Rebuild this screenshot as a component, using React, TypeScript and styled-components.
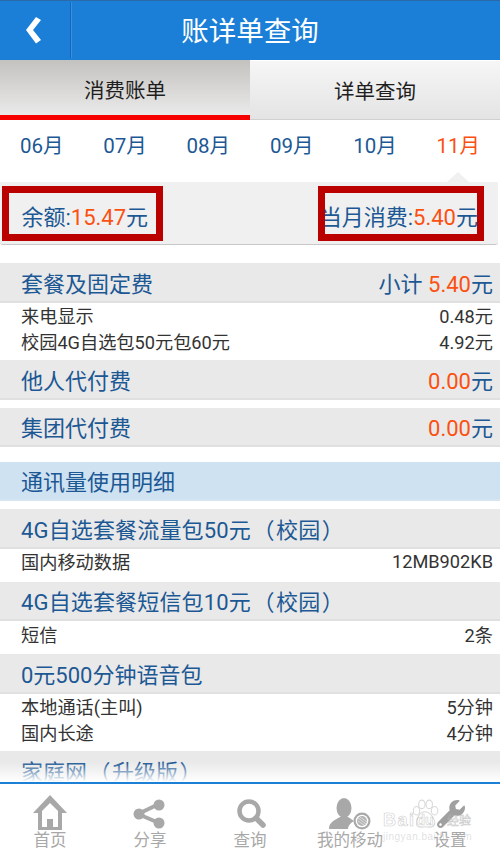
import React from 'react';
import styled, { createGlobalStyle } from 'styled-components';
import { FaWrench } from 'react-icons/fa';

const GlobalStyle = createGlobalStyle`
  html, body { margin: 0; padding: 0; background: #fff; }
  * { box-sizing: border-box; }
  body { font-family: Roboto, "Noto Sans CJK SC", sans-serif; }
`;

const BLUE = '#1c5894';
const ORANGE = '#fb5010';

const Page = styled.div`
  position: relative;
  width: 500px;
  height: 854px;
  display: flex;
  flex-direction: column;
  overflow: hidden;
  background: #fff;
`;

const Header = styled.header`
  flex: 0 0 60px;
  display: flex;
  align-items: stretch;
  background: #1b7fd8;
  border-top: 1px solid #2c69a8;
`;
const BackButton = styled.div`
  flex: 0 0 71px;
  display: flex;
  align-items: center;
  justify-content: center;
  margin: 1px 0 2px;
  padding: 0 2px 0 0;
  border-right: 1px solid #1468b8;
  box-shadow: 1px 0 0 #3590e0;
`;
const Title = styled.h1`
  flex: 1;
  height: 59px;
  margin: 0;
  padding: 0 111px 0 40px;
  text-align: center;
  color: #fff;
  font-size: 27.5px;
  font-weight: 400;
  line-height: 61px;
  white-space: nowrap;
`;

const Tabs = styled.div`
  flex: 0 0 60px;
  display: flex;
`;
const Tab = styled.div<{ $active?: boolean }>`
  flex: 1;
  display: flex;
  align-items: center;
  justify-content: center;
  font-size: 20.5px;
  color: #1e1e1e;
  padding: ${p => (p.$active ? '3px 0 0' : '0 0 1px')};
  background: ${p =>
    p.$active
      ? 'linear-gradient(#c4c2bf, #eaeaea)'
      : 'linear-gradient(#f6f6f6, #e4e4e4)'};
  border-bottom: ${p => (p.$active ? '5px solid #f60000' : '1px solid #d0d0d0')};
  border-top: ${p => (p.$active ? 'none' : '1px solid #fff')};
`;

const Months = styled.div`
  flex: 0 0 62px;
  display: flex;
  align-items: flex-start;
  padding-top: 12px;
`;
const Month = styled.div<{ $active?: boolean }>`
  flex: 1;
  text-align: center;
  font-size: 20.5px;
  line-height: 28px;
  color: ${p => (p.$active ? ORANGE : BLUE)};
`;

const Summary = styled.div`
  position: relative;
  flex: 0 0 63px;
  width: 498px;
  display: flex;
  align-items: center;
  justify-content: space-between;
  padding: 11px 20px 8px 21.5px;
  background: #f0f0f0;
  border-bottom: 1px solid #c8c8c8;
  border-radius: 0 0 3px 3px;
  font-size: 22px;
  color: ${BLUE};
  &::before {
    content: '';
    position: absolute;
    right: 29px;
    top: -10px;
    border-left: 11px solid transparent;
    border-right: 11px solid transparent;
    border-bottom: 10px solid #f0f0f0;
  }
`;
const Mark = styled.div<{ $left: number; $width: number }>`
  position: absolute;
  top: 4px;
  left: ${p => p.$left}px;
  width: ${p => p.$width}px;
  height: 55px;
  border: 7px solid #bb0000;
`;
const Amount = styled.span`
  color: ${ORANGE};
`;

const Content = styled.div`
  flex: 1;
  overflow: hidden;
  min-height: 0;
`;
const Section = styled.section<{ $gap: number }>`
  margin-top: ${p => p.$gap}px;
`;
const SectionHead = styled.div<{ $tint?: boolean }>`
  height: ${p => (p.$tint ? '38.5px' : '39.5px')};
  display: flex;
  align-items: center;
  justify-content: space-between;
  padding: 0 7px 0 21px;
  background: ${p => (p.$tint ? '#cfe2f2' : '#e9e9e9')};
  border-bottom: 2px solid ${p => (p.$tint ? '#d6e5f2' : '#e0e0e0')};
  font-size: 22px;
  color: ${BLUE};
  white-space: nowrap;
`;
const Paren = styled.span`
  font-family: "Noto Sans CJK TC", sans-serif;
  margin: 0 1.5px;
`;
const PackageName = styled.span`
  letter-spacing: 0.15px;
`;
const Rows = styled.div`
  min-height: 33px;
  padding: 0 7px 6.5px 21px;
`;
const Row = styled.div`
  height: 25.5px;
  display: flex;
  align-items: center;
  justify-content: space-between;
  font-size: 18.2px;
  color: #333;
`;

const Fade = styled.div`
  position: absolute;
  left: 0;
  right: 0;
  bottom: 72px;
  height: 20px;
  background: linear-gradient(rgba(255, 255, 255, 0), #fff);
`;

const Footer = styled.footer`
  position: relative;
  flex: 0 0 72px;
  display: flex;
  background: #fff;
  border-top: 2px solid #1b80d6;
`;
const NavItem = styled.div`
  flex: 1;
  display: flex;
  flex-direction: column;
  align-items: center;
  font-size: 16.5px;
  line-height: 16px;
  color: #a8a8a8;
`;
const NavIcon = styled.svg`
  display: block;
  width: 100px;
  height: 48px;
  margin-bottom: 1px;
  fill: #a8a8a8;
`;
const WrenchBox = styled.div`
  height: 49px;
  padding: 16px 0 0 2px;
  color: #a0a0a0;
`;

const Watermark = styled.div`
  position: absolute;
  left: 383px;
  top: 27px;
  width: 88px;
  pointer-events: none;
`;
const WatermarkMain = styled.div`
  display: flex;
  align-items: center;
  white-space: nowrap;
  font-family: "Liberation Sans", sans-serif;
  font-size: 18px;
  font-weight: 700;
  line-height: 18px;
  letter-spacing: 1.5px;
  color: rgba(255, 255, 255, 0.2);
  -webkit-text-stroke: 0.6px rgba(170, 170, 170, 0.6);
`;
const WatermarkDu = styled.span`
  margin-left: 1px;
  font-size: 14px;
  letter-spacing: 0;
`;
const WatermarkCn = styled.span`
  margin-left: auto;
  font-family: "Noto Sans CJK SC", sans-serif;
  font-size: 12px;
  font-weight: 400;
  letter-spacing: 0;
`;
const WatermarkUrl = styled.div`
  margin-top: 2px;
  font-family: "Liberation Sans", sans-serif;
  font-size: 10px;
  line-height: 12px;
  letter-spacing: 0.5px;
  white-space: nowrap;
  color: rgba(178, 178, 178, 0.4);
`;
const Paw = styled.svg`
  position: absolute;
  left: 25px;
  top: -13px;
  width: 34px;
  height: 34px;
  fill: none;
  stroke: rgba(178, 178, 178, 0.5);
`;

const months = ['06月', '07月', '08月', '09月', '10月', '11月'];

const Title4G = ({ children }: { children: string }) => (
  <PackageName>
    {children}
    <Paren>（</Paren>校园<Paren>）</Paren>
  </PackageName>
);

export default function App() {
  return (
    <Page>
      <GlobalStyle />
      <Header>
        <BackButton>
          <svg width="18" height="28" viewBox="0 0 18 28">
            <path d="M11 1 L16 4 L8 14 L16 24 L11 27.5 L1 14 Z" fill="#fff" />
          </svg>
        </BackButton>
        <Title>账详单查询</Title>
      </Header>

      <Tabs>
        <Tab $active>消费账单</Tab>
        <Tab>详单查询</Tab>
      </Tabs>

      <Months>
        {months.map((m, i) => (
          <Month key={m} $active={i === months.length - 1}>{m}</Month>
        ))}
      </Months>

      <Summary>
        <span>余额:<Amount>15.47</Amount>元</span>
        <span>当月消费:<Amount>5.40</Amount>元</span>
        <Mark $left={2} $width={161} />
        <Mark $left={318} $width={166} />
      </Summary>

      <Content>
        <Section $gap={18}>
          <SectionHead>
            <span>套餐及固定费</span>
            <span>小计 <Amount>5.40</Amount>元</span>
          </SectionHead>
          <Rows>
            <Row><span>来电显示</span><span>0.48元</span></Row>
            <Row><span>校园4G自选包50元包60元</span><span>4.92元</span></Row>
          </Rows>
        </Section>
        <Section $gap={0}>
          <SectionHead>
            <span>他人代付费</span>
            <span><Amount>0.00</Amount>元</span>
          </SectionHead>
        </Section>
        <Section $gap={8}>
          <SectionHead>
            <span>集团代付费</span>
            <span><Amount>0.00</Amount>元</span>
          </SectionHead>
        </Section>
        <Section $gap={15}>
          <SectionHead $tint><span>通讯量使用明细</span></SectionHead>
        </Section>
        <Section $gap={8.5}>
          <SectionHead><Title4G>4G自选套餐流量包50元</Title4G></SectionHead>
          <Rows>
            <Row><span>国内移动数据</span><span>12MB902KB</span></Row>
          </Rows>
        </Section>
        <Section $gap={0}>
          <SectionHead><Title4G>4G自选套餐短信包10元</Title4G></SectionHead>
          <Rows>
            <Row><span>短信</span><span>2条</span></Row>
          </Rows>
        </Section>
        <Section $gap={0}>
          <SectionHead><span>0元500分钟语音包</span></SectionHead>
          <Rows>
            <Row><span>本地通话(主叫)</span><span>5分钟</span></Row>
            <Row><span>国内长途</span><span>4分钟</span></Row>
          </Rows>
        </Section>
        <Section $gap={0}>
          <SectionHead>
            <span>家庭网<Paren>（</Paren>升级版<Paren>）</Paren></span>
          </SectionHead>
        </Section>
      </Content>
      <Fade />

      <Footer>
        <NavItem>
          <NavIcon viewBox="0 0 100 48">
            <path
              fillRule="evenodd"
              d="M50 11 L67 29 H62 V46 H38 V29 H33 Z M50 19 L42 27 V43 H47 V35 H53 V43 H58 V27 Z"
            />
            <rect x="49" y="37" width="2" height="6" />
          </NavIcon>
          首页
        </NavItem>
        <NavItem>
          <NavIcon viewBox="0 0 100 48">
            <path d="M38 30 L59 20 M38 30 L59 39" stroke="#a8a8a8" strokeWidth="4" fill="none" />
            <circle cx="39" cy="30" r="5.5" />
            <circle cx="59" cy="21" r="5.5" />
            <circle cx="59" cy="39" r="5.5" />
          </NavIcon>
          分享
        </NavItem>
        <NavItem>
          <NavIcon viewBox="0 0 100 48">
            <circle cx="49" cy="27" r="9.5" fill="none" stroke="#a8a8a8" strokeWidth="4.5" />
            <path d="M56 34 L63 41" stroke="#a8a8a8" strokeWidth="5.5" strokeLinecap="round" fill="none" />
          </NavIcon>
          查询
        </NavItem>
        <NavItem>
          <NavIcon viewBox="0 0 100 48">
            <ellipse cx="44" cy="24" rx="7.5" ry="10" />
            <path d="M29 45 C29 38 35 36 40 33 H48 C51 35 53 36 54 37 C50 39 48 42 48 45 Z" />
            <circle cx="62" cy="37" r="8.5" />
            <circle cx="62" cy="37" r="6.3" fill="#fff" />
            <circle cx="62" cy="37" r="5" fill="#b4b4b4" />
            <path d="M58 34 L66 40 M58 37 L64 41 M60 33 L67 38" stroke="#e8e8e8" strokeWidth="0.8" fill="none" />
          </NavIcon>
          我的移动
        </NavItem>
        <NavItem>
          <WrenchBox><FaWrench size={28} /></WrenchBox>
          设置
        </NavItem>
        <Watermark>
          <Paw viewBox="0 0 32 32">
            <ellipse cx="8" cy="12" rx="3" ry="4" />
            <ellipse cx="13" cy="6" rx="3" ry="4" />
            <ellipse cx="20" cy="6" rx="3" ry="4" />
            <ellipse cx="25" cy="12" rx="3" ry="4" />
            <path d="M16 13 C11 13 7 20 8 25 C10 29 14 27 16 27 C19 27 23 29 25 25 C26 20 21 13 16 13 Z" />
          </Paw>
          <WatermarkMain>
            <span>Bai</span>
            <WatermarkDu>du</WatermarkDu>
            <WatermarkCn>经验</WatermarkCn>
          </WatermarkMain>
          <WatermarkUrl>jingyan.baidu.com</WatermarkUrl>
        </Watermark>
      </Footer>
    </Page>
  );
}
